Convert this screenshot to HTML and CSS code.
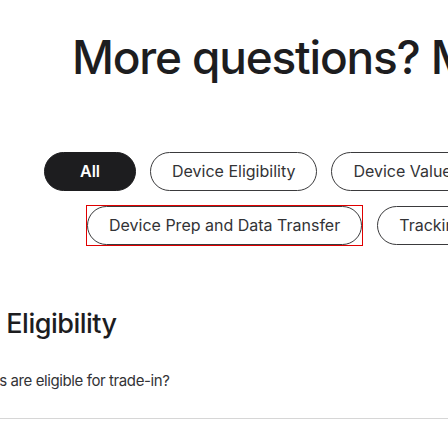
FILE: index.html
```html
<!DOCTYPE html>
<html lang="en">
<head>
<meta charset="utf-8">
<title>More questions</title>
<link rel="stylesheet" href="styles.css">
</head>
<body>
<div class="page">
  <h1 class="title">More questions? Maybe we can help.</h1>
  <div class="filters">
    <div class="pill-row row-one">
      <button class="pill pill-active">All</button>
      <button class="pill">Device Eligibility</button>
      <button class="pill">Device Value</button>
    </div>
    <div class="pill-row row-two">
      <span class="focus-ring"><button class="pill">Device Prep and Data Transfer</button></span>
      <button class="pill">Tracking and Shipping</button>
    </div>
  </div>
  <section class="faq">
    <h2 class="faq-heading">Device Eligibility</h2>
    <div class="faq-item">
      <p class="faq-question">Which devices are eligible for trade-in?</p>
    </div>
  </section>
</div>
</body>
</html>
```
FILE: styles.css
```css
* { box-sizing: border-box; }
html, body { margin: 0; padding: 0; background: #fff; }
body {
  font-family: Inter, "Noto Sans", "Liberation Sans", sans-serif;
  color: #1d1d1f;
}
.page {
  width: 448px;
  height: 448px;
  overflow: hidden;
}
.title {
  margin: 0;
  padding: 30px 0 0 72px;
  font-size: 46px;
  line-height: 54px;
  font-weight: 500;
  letter-spacing: -1.2px;
  white-space: nowrap;
  color: #1d1d1f;
}
.filters {
  margin-top: 68px;
  display: flex;
  flex-direction: column;
  gap: 14px;
}
.pill-row {
  display: flex;
  align-items: center;
  gap: 14px;
  white-space: nowrap;
}
.row-one { padding-left: 44px; }
.row-two { padding-left: 86px; }
.pill {
  flex: none;
  font-family: inherit;
  font-size: 16px;
  line-height: 23px;
  font-weight: 400;
  color: #333336;
  background: #fff;
  border: 1px solid #3a3a3c;
  border-radius: 999px;
  padding: 7px 21px;
  margin: 0;
}
.pill-active {
  min-width: 92px;
  background: #1d1d1f;
  border-color: #1d1d1f;
  color: #fff;
  font-weight: 600;
}
.focus-ring {
  display: flex;
  flex: none;
  border: 1px solid #e00000;
}
.faq {
  margin-top: 61px;
  margin-left: -86px;
}
.faq-heading {
  margin: 0;
  font-size: 27px;
  line-height: 34px;
  font-weight: 500;
  letter-spacing: -0.5px;
  white-space: nowrap;
  color: #1d1d1f;
}
.faq-item {
  margin-top: 29px;
  margin-left: 86px;
  border-bottom: 1px solid #d6d6d6;
  padding-bottom: 26px;
}
.faq-question {
  margin: 0 0 0 -92px;
  font-size: 15px;
  line-height: 22px;
  font-weight: 400;
  letter-spacing: -0.4px;
  color: #333336;
  white-space: nowrap;
}
```
